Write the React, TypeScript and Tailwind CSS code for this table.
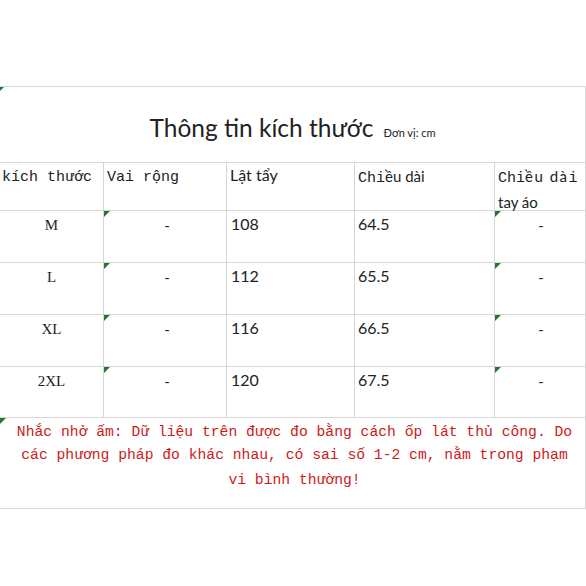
import React from "react";

function Tri() {
  return (
    <span className="absolute left-0 top-0 w-0 h-0 border-t-[6px] border-t-[#1f7a2e] border-r-[6px] border-r-transparent" />
  );
}

const rows = [
  { s: "M", a: "108", b: "64.5", h: "h-[52px]" },
  { s: "L", a: "112", b: "65.5", h: "h-[52px]" },
  { s: "XL", a: "116", b: "66.5", h: "h-[52px]" },
  { s: "2XL", a: "120", b: "67.5", h: "h-[51px]" },
];

const cell = "border-b border-r border-[#d6d6d6]";
const mono = "font-['Liberation_Mono',monospace]";
const sans = "font-['Lato','Liberation_Sans',sans-serif]";
const serif = "font-['Liberation_Serif',serif]";

export default function App() {
  return (
    <div className="w-[586px] h-[586px] bg-white text-[#222] overflow-hidden">
      <div className="h-[86px]" />
      <div className="grid grid-cols-[104px_123px_128px_140px_91px] border-t border-[#d6d6d6]">
        <div className={`relative col-span-5 h-[76px] ${cell} flex items-end justify-center pb-[22px]`}>
          <span className="absolute left-0 top-0 w-0 h-0 border-t-[4px] border-t-[#1f7a2e] border-r-[4px] border-r-transparent" />
          <span className={`text-[24.5px] leading-none ${sans}`}>Thông tin kích thước</span>
          <span className={`text-[11px] leading-none ml-[10px] mb-[2px] ${sans}`}>Đơn vị: cm</span>
        </div>
        <div className={`h-[48px] ${cell} pl-[2px] pt-[5px] text-[15px] leading-[20px] whitespace-nowrap ${mono}`}>kích thước</div>
        <div className={`h-[48px] ${cell} pl-[3px] pt-[5px] text-[15px] leading-[20px] ${mono}`}>Vai rộng</div>
        <div className={`h-[48px] ${cell} pl-[3px] pt-[2px] text-[16px] leading-[20px] ${sans}`}>Lật tẩy</div>
        <div className={`h-[48px] ${cell} pl-[3px] pt-[3px] text-[15px] leading-[20px]`}>
          <span className={mono}>Chi</span><span className={sans}>ều dài</span>
        </div>
        <div className={`h-[48px] ${cell} pl-[3px] pt-[3px] text-[15px] leading-[20px] whitespace-nowrap`}>
          <div><span className={mono}>Chi</span><span className={`${sans} tracking-[1.5px]`}>ều dà</span><span className={mono}>i</span></div>
          <div className={`${sans} mt-[3px]`}>tay áo</div>
        </div>
        {rows.map((r) => (
          <React.Fragment key={r.s}>
            <div className={`${r.h} ${cell} text-center pt-[4px] text-[15px] leading-[20px] ${serif}`}>{r.s}</div>
            <div className={`${r.h} relative ${cell} text-center pt-[4px] pl-[4px] text-[15px] leading-[20px] ${sans}`}>
              <Tri />-
            </div>
            <div className={`${r.h} ${cell} pl-[4px] pt-[3px] text-[16px] leading-[20px] ${sans}`}>{r.a}</div>
            <div className={`${r.h} ${cell} pl-[3px] pt-[3px] text-[16px] leading-[20px] ${sans}`}>{r.b}</div>
            <div className={`${r.h} relative ${cell} text-center pt-[4px] pl-[2px] text-[15px] leading-[20px] ${sans}`}>
              <Tri />-
            </div>
          </React.Fragment>
        ))}
        <div className={`relative col-span-5 h-[91px] ${cell} text-center text-[#cc1a1a] text-[14.7px] leading-[23px] pt-[3px] pl-[4px] whitespace-nowrap ${mono}`}>
          <Tri />
          <div>Nhắc nhở ấm: Dữ liệu trên được đo bằng cách ốp lát thủ công. Do</div>
          <div>các phương pháp đo khác nhau, có sai số 1-2 cm, nằm trong phạm</div>
          <div className="mt-[2px]">vi bình thường!</div>
        </div>
      </div>
    </div>
  );
}
